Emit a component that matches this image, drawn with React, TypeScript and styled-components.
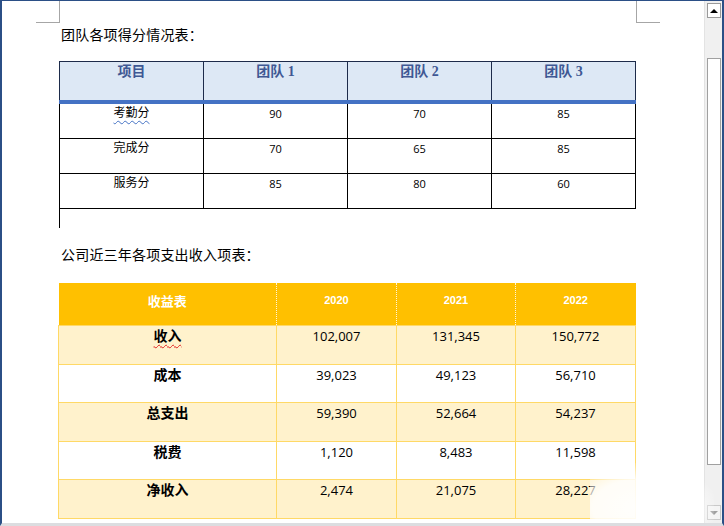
import React from 'react'
import styled, { createGlobalStyle } from 'styled-components'

const GlobalStyle = createGlobalStyle`
  html, body {
    margin: 0;
    padding: 0;
    background: #ffffff;
  }
`

const scoreRows = [
  { name: '考勤分', spell: true, values: ['90', '70', '85'] },
  { name: '完成分', spell: false, values: ['70', '65', '85'] },
  { name: '服务分', spell: false, values: ['85', '80', '60'] },
]

const incomeRows = [
  { name: '收入', spell: true, values: ['102,007', '131,345', '150,772'] },
  { name: '成本', spell: false, values: ['39,023', '49,123', '56,710'] },
  { name: '总支出', spell: false, values: ['59,390', '52,664', '54,237'] },
  { name: '税费', spell: false, values: ['1,120', '8,483', '11,598'] },
  { name: '净收入', spell: false, values: ['2,474', '21,075', '28,227'] },
]

export default function App() {
  return (
    <>
      <GlobalStyle />
      <Window>
        <Page>
          <CropMark $side="left" />
          <CropMark $side="right" />
          <Title>团队各项得分情况表：</Title>
          <ScoreTable>
            <colgroup>
              <col style={{ width: 144 }} />
              <col style={{ width: 144 }} />
              <col style={{ width: 144 }} />
              <col style={{ width: 144 }} />
            </colgroup>
            <thead>
              <tr>
                <ScoreHead>项目</ScoreHead>
                <ScoreHead>团队 1</ScoreHead>
                <ScoreHead>团队 2</ScoreHead>
                <ScoreHead>团队 3</ScoreHead>
              </tr>
            </thead>
            <tbody>
              {scoreRows.map((row) => (
                <tr key={row.name}>
                  <ScoreName>
                    <Spell $color="#4472c4" $on={row.spell}>
                      {row.name}
                    </Spell>
                  </ScoreName>
                  {row.values.map((v, i) => (
                    <ScoreCell key={i}>{v}</ScoreCell>
                  ))}
                </tr>
              ))}
            </tbody>
          </ScoreTable>
          <Caret />
          <Title $second>公司近三年各项支出收入项表：</Title>
          <IncomeTable>
            <colgroup>
              <col style={{ width: 218 }} />
              <col style={{ width: 120 }} />
              <col style={{ width: 119 }} />
              <col style={{ width: 120 }} />
            </colgroup>
            <thead>
              <tr>
                <IncomeHead $cjk>收益表</IncomeHead>
                <IncomeHead>2020</IncomeHead>
                <IncomeHead>2021</IncomeHead>
                <IncomeHead>2022</IncomeHead>
              </tr>
            </thead>
            <tbody>
              {incomeRows.map((row, r) => (
                <IncomeRow key={row.name} $band={r % 2 === 0}>
                  <IncomeName>
                    <Spell $color="#e02020" $on={row.spell}>
                      {row.name}
                    </Spell>
                  </IncomeName>
                  {row.values.map((v, i) => (
                    <IncomeCell key={i}>{v}</IncomeCell>
                  ))}
                </IncomeRow>
              ))}
            </tbody>
          </IncomeTable>
          <Smudge />
        </Page>
        <ScrollBar>
          <ScrollButton>
            <Arrow $up />
          </ScrollButton>
          <ScrollTrack>
            <Thumb />
          </ScrollTrack>
          <ScrollButton $faded>
            <Arrow />
          </ScrollButton>
        </ScrollBar>
      </Window>
    </>
  )
}

const Window = styled.div`
  position: relative;
  display: flex;
  width: 724px;
  height: 526px;
  box-sizing: border-box;
  border-top: 1px solid #2b4f86;
  border-left: 2px solid #2b4f86;
  border-right: 2px solid #2b4f86;
  border-bottom: 3px solid #dcdde0;
  overflow: hidden;
  background: #ffffff;
`

const Page = styled.div`
  position: relative;
  flex: 1;
  padding: 23px 0 0 56px;
  font-family: 'Noto Sans CJK SC', sans-serif;
  color: #000000;
`

const CropMark = styled.div<{ $side: 'left' | 'right' }>`
  position: absolute;
  top: -1px;
  width: 23px;
  height: 22px;
  border-bottom: 1px solid #a6a6a6;
  ${(p) =>
    p.$side === 'left'
      ? 'left: 34px; border-right: 1px solid #a6a6a6;'
      : 'left: 634px; border-left: 1px solid #a6a6a6;'}
`

const Title = styled.div<{ $second?: boolean }>`
  height: 20px;
  line-height: 20px;
  font-size: 14px;
  padding-left: 3px;
  margin-top: ${(p) => (p.$second ? '16px' : '0')};
  margin-bottom: ${(p) => (p.$second ? '19px' : '17px')};
  letter-spacing: 0.2px;
`

const ScoreTable = styled.table`
  border-collapse: collapse;
  table-layout: fixed;
  width: 577px;
  margin-left: 1px;
`

const ScoreHead = styled.th`
  height: 37px;
  padding: 1px 0 0;
  vertical-align: top;
  background: #dde8f5;
  border: 1px solid #1d2b4a;
  border-bottom: 4px solid #4472c4;
  font-family: 'Liberation Serif', 'Noto Sans CJK SC', serif;
  font-weight: 700;
  font-size: 14px;
  color: #3f5894;
  line-height: 18px;
`

const ScoreCell = styled.td`
  height: 32px;
  padding: 2px 0 0;
  vertical-align: top;
  text-align: center;
  border: 1px solid #000000;
  font-family: 'Open Sans', 'Noto Sans', sans-serif;
  font-size: 11px;
  line-height: 15px;
`

const ScoreName = styled(ScoreCell)`
  font-family: 'Noto Sans CJK SC', sans-serif;
  font-size: 12px;
  padding-top: 0;
  height: 34px;
`

const Spell = styled.span<{ $color: string; $on: boolean }>`
  text-decoration: ${(p) => (p.$on ? `underline wavy ${p.$color}` : 'none')};
  text-decoration-thickness: 1px;
  text-underline-offset: 3px;
`

const Caret = styled.div`
  width: 1px;
  height: 19px;
  margin-left: 1px;
  background: #000000;
`

const IncomeTable = styled.table`
  border-collapse: collapse;
  table-layout: fixed;
  width: 577px;
`

const IncomeHead = styled.th<{ $cjk?: boolean }>`
  height: 34px;
  padding: 0 0 8px;
  background: #ffc000;
  border-left: 1px dotted #fff6d8;
  color: #ffffff;
  font-family: ${(p) =>
    p.$cjk ? "'Noto Sans CJK SC', sans-serif" : "'Liberation Sans', sans-serif"};
  font-weight: 700;
  font-size: ${(p) => (p.$cjk ? '13px' : '11px')};
  text-align: center;
  vertical-align: middle;
  &:first-child {
    border-left: none;
  }
`

const IncomeRow = styled.tr<{ $band: boolean }>`
  background: ${(p) => (p.$band ? '#fff2cc' : '#ffffff')};
`

const IncomeCell = styled.td`
  height: 36.6px;
  padding: 1px 0 0;
  vertical-align: top;
  text-align: center;
  border: 1px solid #ffd966;
  font-family: 'Open Sans', 'Noto Sans', sans-serif;
  font-size: 13px;
  line-height: 18px;
`

const IncomeName = styled(IncomeCell)`
  font-family: 'Noto Sans CJK SC', sans-serif;
  font-weight: 700;
  font-size: 14px;
  padding-top: 0;
  height: 37.6px;
`

const Smudge = styled.div`
  position: absolute;
  left: 588px;
  top: 462px;
  width: 124px;
  height: 74px;
  background: radial-gradient(
    ellipse at 40% 60%,
    rgba(255, 255, 255, 0.95) 0%,
    rgba(255, 255, 255, 0.85) 45%,
    rgba(255, 255, 255, 0) 75%
  );
  pointer-events: none;
`

const ScrollBar = styled.div`
  width: 17px;
  display: flex;
  flex-direction: column;
  align-items: center;
  background: #f0f0f0;
  border-left: 1px solid #e3e3e3;
  padding: 2px 0 3px;
`

const ScrollButton = styled.div<{ $faded?: boolean }>`
  width: 14px;
  height: 15px;
  box-sizing: border-box;
  border: 1px solid ${(p) => (p.$faded ? '#c9c9c9' : '#9a9a9a')};
  background: ${(p) => (p.$faded ? '#f4f4f4' : '#ffffff')};
  display: flex;
  align-items: center;
  justify-content: center;
  color: ${(p) => (p.$faded ? '#a0a0a0' : '#000000')};
`

const Arrow = styled.div<{ $up?: boolean }>`
  width: 0;
  height: 0;
  border-left: 4px solid transparent;
  border-right: 4px solid transparent;
  ${(p) =>
    p.$up
      ? 'border-bottom: 4px solid currentColor;'
      : 'border-top: 4px solid currentColor;'}
`

const ScrollTrack = styled.div`
  flex: 1;
  width: 100%;
  display: flex;
  flex-direction: column;
  align-items: center;
  padding-top: 40px;
  padding-bottom: 40px;
`

const Thumb = styled.div`
  width: 14px;
  flex: 1;
  box-sizing: border-box;
  border: 1px solid #a0a0a0;
  background: #ffffff;
`
